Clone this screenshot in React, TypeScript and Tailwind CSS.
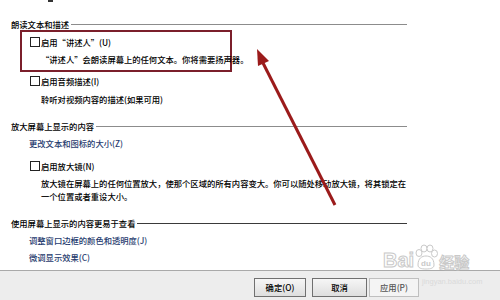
import React from 'react';

const font = { fontFamily: '"Noto Sans CJK SC", "Noto Sans", sans-serif' };

function Header({ text, line = 'bg-[#8c8c8c]' }: { text: string; line?: string }) {
  return (
    <div className="flex items-center h-[12px] pl-[11px] pr-[93px]">
      <span className="leading-[12px] whitespace-nowrap text-black">{text}</span>
      <div className={`flex-1 h-px ml-[2px] ${line}`} />
    </div>
  );
}

function Check({ label }: { label: string }) {
  return (
    <div className="flex items-center h-[16px] gap-[1px]">
      <span className="w-[10px] h-[10px] border border-[#222] bg-white" />
      <span className="leading-[16px] whitespace-nowrap">{label}</span>
    </div>
  );
}

function Button({ label, w, disabled = false }: { label: string; w: string; disabled?: boolean }) {
  return (
    <button
      className={`${w} h-[19px] flex items-center justify-center border leading-none ${
        disabled
          ? 'border-[#bfbfbf] bg-[#f4f4f4] text-[#555]'
          : 'border-[#707070] bg-gradient-to-b from-[#f6f6f6] to-[#dedede] text-black'
      }`}
    >
      {label}
    </button>
  );
}

export default function App() {
  return (
    <div
      className="w-[500px] h-[300px] bg-white relative overflow-hidden flex flex-col text-[8.3px] font-medium text-black"
      style={font}
    >
      {/* top remnant */}
      <div className="h-[18px]">
        <div className="ml-[48px] w-[5px] h-[2px] bg-[#333]" />
      </div>

      <Header text="朗读文本和描述" />

      <div className="ml-[20px] w-[212px] border-2 border-[#7b1f2b] pt-[2px] pb-[3px] pl-[8px]">
        <Check label="启用“讲述人”(U)" />
        <div className="mt-[1px] pl-[11px] h-[16px] leading-[16px] whitespace-nowrap">
          “讲述人”会朗读屏幕上的任何文本。你将需要扬声器。
        </div>
      </div>

      <div className="ml-[30px] mt-[1px]">
        <Check label="启用音频描述(I)" />
      </div>
      <div className="ml-[41px] mt-[2px] h-[16px] leading-[16px] whitespace-nowrap">
        聆听对视频内容的描述(如果可用)
      </div>

      <div className="mt-[13px]">
        <Header text="放大屏幕上显示的内容" />
      </div>
      <div className="ml-[29px] mt-[3px] h-[16px] leading-[16px] text-[#1f3b6e] whitespace-nowrap">
        更改文本和图标的大小(Z)
      </div>
      <div className="ml-[30px] mt-[7px]">
        <Check label="启用放大镜(N)" />
      </div>
      <div className="ml-[41px] mt-[3px] leading-[13px] whitespace-nowrap">
        放大镜在屏幕上的任何位置放大，使那个区域的所有内容变大。你可以随处移动放大镜，将其锁定在
        <br />
        一个位置或者重设大小。
      </div>

      <div className="mt-[14px]">
        <Header text="使用屏幕上显示的内容更易于查看" line="bg-[#3a3a3a]" />
      </div>
      <div className="ml-[29px] mt-[3px] h-[16px] leading-[16px] text-[#1f3b6e] whitespace-nowrap">
        调整窗口边框的颜色和透明度(J)
      </div>
      <div className="ml-[29px] mt-[1px] h-[16px] leading-[16px] text-[#1f3b6e] whitespace-nowrap">
        微调显示效果(C)
      </div>

      <div className="mt-auto h-[30px] border-t border-[#a9a9a9] bg-[#ededed] flex items-start pt-[7px] pl-[254px] gap-[6px]">
        <Button label="确定(O)" w="w-[52px]" />
        <Button label="取消" w="w-[55px]" />
        <div className="-ml-[4px]">
          <Button label="应用(P)" w="w-[50px]" disabled />
        </div>
      </div>

      {/* Baidu watermark */}
      <div className="absolute left-[383px] top-[244px] flex items-end pointer-events-none opacity-90">
        <span
          className="text-[20px] font-bold leading-none text-white [-webkit-text-stroke:1px_#c4c4c4]"
          style={{ fontFamily: '"Liberation Sans", sans-serif' }}
        >
          Bai
        </span>
        <svg width="26" height="26" viewBox="0 0 26 26" className="-ml-[1px]">
          <g fill="#fff" stroke="#c4c4c4" strokeWidth="1">
            <ellipse cx="6" cy="9" rx="3" ry="3.5" />
            <ellipse cx="11" cy="4.5" rx="3" ry="3.5" />
            <ellipse cx="17" cy="4.5" rx="3" ry="3.5" />
            <ellipse cx="21.5" cy="9.5" rx="3" ry="3.5" />
            <path d="M5 21 C5 14 9 12 13 12 C17 12 21 14 21 21 C21 24 18 25 13 25 C8 25 5 24 5 21 Z" />
          </g>
          <text x="13" y="22" textAnchor="middle" fontSize="8" fill="#c4c4c4" fontFamily="Liberation Sans, sans-serif" fontWeight="bold">
            du
          </text>
        </svg>
        <span className="text-[15px] font-bold leading-none text-white [-webkit-text-stroke:1px_#c4c4c4] mb-[1px]">
          经验
        </span>
      </div>
      <div
        className="absolute left-[422px] top-[278px] text-[7.5px] leading-none text-[#dadada] pointer-events-none"
        style={{ fontFamily: '"Liberation Sans", sans-serif' }}
      >
        jingyan.baidu.com
      </div>

      {/* red arrow annotation */}
      <svg className="absolute inset-0 pointer-events-none" width="500" height="300">
        <line x1="335" y1="205" x2="263" y2="63" stroke="#9b1b1b" strokeWidth="3" />
        <polygon points="257,49 269,61 258,66" fill="#9b1b1b" />
      </svg>
    </div>
  );
}
